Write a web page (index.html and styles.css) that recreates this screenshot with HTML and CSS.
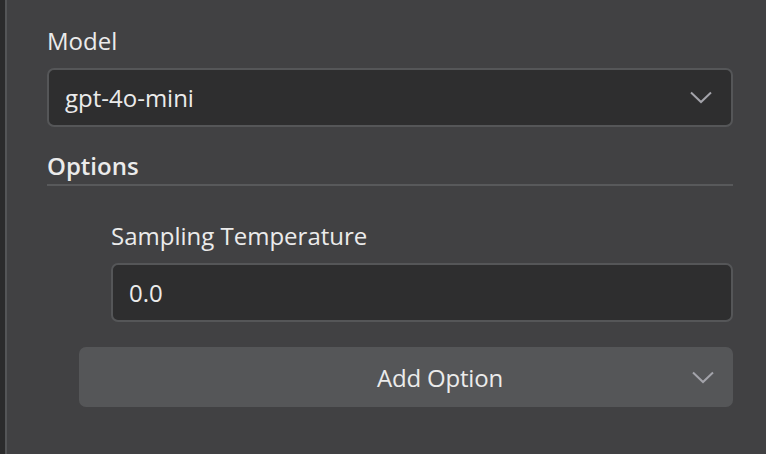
FILE: index.html
```html
<!DOCTYPE html>
<html>
<head>
<meta charset="utf-8">
<link rel="stylesheet" href="styles.css">
</head>
<body>
<div class="app">
  <div class="rail"></div>
  <div class="panel">
    <div class="field">
      <div class="label">Model</div>
      <div class="select">
        <span class="value">gpt-4o-mini</span>
        <svg class="chev" width="22" height="13" viewBox="0 0 22 13"><path d="M1 1.5 L11 11 L21 1.5" fill="none" stroke="#a3a3aa" stroke-width="2"/></svg>
      </div>
    </div>
    <div class="section">Options</div>
    <div class="options">
      <div class="field sub">
        <div class="label">Sampling Temperature</div>
        <div class="input"><span class="value">0.0</span></div>
      </div>
      <div class="add">
        <span class="add-text">Add Option</span>
        <svg class="chev" width="22" height="13" viewBox="0 0 22 13"><path d="M1 1.5 L11 11 L21 1.5" fill="none" stroke="#a3a3aa" stroke-width="2"/></svg>
      </div>
    </div>
  </div>
</div>
</body>
</html>
```
FILE: styles.css
```css
html, body {
  margin: 0;
  padding: 0;
  background: #414143;
}
body {
  font-family: "Open Sans", "Noto Sans", sans-serif;
  color: #ebebeb;
  width: 766px;
  height: 454px;
  overflow: hidden;
}
.app {
  display: flex;
  height: 454px;
}
.rail {
  width: 5px;
  background: #2b2b2c;
  border-right: 2px solid #545557;
  flex: none;
}
.panel {
  flex: 1;
  padding: 26px 33px 0 40px;
}
.label {
  font-size: 24px;
  line-height: 30px;
  height: 30px;
  margin-bottom: 12px;
}
.select, .input {
  box-sizing: border-box;
  height: 59px;
  background: #2e2e2f;
  border: 2px solid #555658;
  border-radius: 7px;
  display: flex;
  align-items: center;
  padding: 0 19px 0 16px;
}
.value {
  font-size: 24px;
  flex: 1;
}
.chev {
  flex: none;
}
.section {
  margin-top: 24px;
  font-size: 24px;
  font-weight: 600;
  line-height: 30px;
  padding-bottom: 3px;
  border-bottom: 2px solid #58595b;
}
.options {
  padding-top: 35px;
}
.sub {
  margin-left: 64px;
}
.add {
  margin-top: 25px;
  margin-left: 32px;
  height: 60px;
  background: #555658;
  border-radius: 7px;
  display: flex;
  align-items: center;
  padding: 0 19px 0 16px;
}
.add-text {
  flex: 1;
  text-align: center;
  font-size: 24px;
  padding-left: 93px;
  letter-spacing: -0.2px;
}
```
